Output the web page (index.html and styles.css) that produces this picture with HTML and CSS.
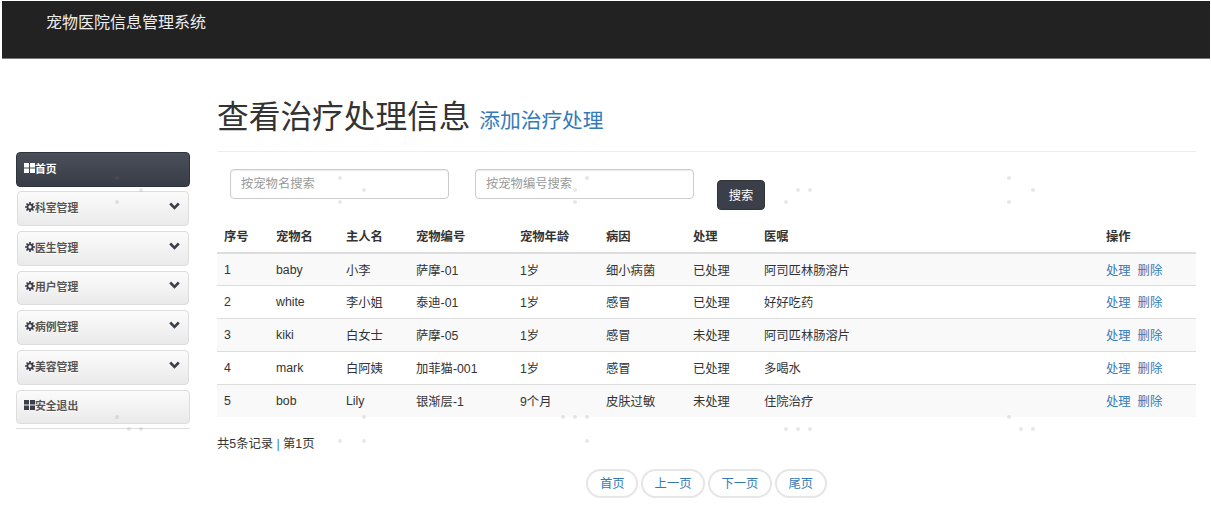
FILE: index.html
```html
<!DOCTYPE html>
<html lang="zh-CN">
<head>
    <meta charset="UTF-8">
    <title>宠物医院信息管理系统</title>
    <link rel="stylesheet" href="styles.css">
</head>
<body>
    <svg width="0" height="0" class="sprites">
        <symbol id="i-grid" viewBox="0 0 11 10">
            <path d="M0 0h5v4.5H0zM6 0h5v4.5H6zM0 5.5h5V10H0zM6 5.5h5V10H6z" fill="currentColor"/>
        </symbol>
        <symbol id="i-cog" viewBox="0 0 12 12">
            <circle cx="6" cy="6" r="3.1" fill="none" stroke="currentColor" stroke-width="2.2"/>
            <path d="M6 0v2.5M6 9.5V12M0 6h2.5M9.5 6H12M1.8 1.8l1.8 1.8M8.4 8.4l1.8 1.8M1.8 10.2l1.8-1.8M8.4 3.6l1.8-1.8" fill="none" stroke="currentColor" stroke-width="2"/>
        </symbol>
        <symbol id="i-down" viewBox="0 0 11 8">
            <path d="M1.2 1.5 5.5 5.8 9.8 1.5" fill="none" stroke="currentColor" stroke-width="2.6"/>
        </symbol>
    </svg>

    <nav class="navbar">
        <a class="brand">宠物医院信息管理系统</a>
    </nav>

    <div class="layout">
        <aside class="sidebar">
            <a class="side-btn home"><svg class="ico-grid"><use href="#i-grid"/></svg>首页</a>
            <a class="side-btn menu"><svg class="ico-cog"><use href="#i-cog"/></svg>科室管理<svg class="ico-down"><use href="#i-down"/></svg></a>
            <a class="side-btn menu"><svg class="ico-cog"><use href="#i-cog"/></svg>医生管理<svg class="ico-down"><use href="#i-down"/></svg></a>
            <a class="side-btn menu"><svg class="ico-cog"><use href="#i-cog"/></svg>用户管理<svg class="ico-down"><use href="#i-down"/></svg></a>
            <a class="side-btn menu"><svg class="ico-cog"><use href="#i-cog"/></svg>病例管理<svg class="ico-down"><use href="#i-down"/></svg></a>
            <a class="side-btn menu"><svg class="ico-cog"><use href="#i-cog"/></svg>美容管理<svg class="ico-down"><use href="#i-down"/></svg></a>
            <a class="side-btn logout"><svg class="ico-grid"><use href="#i-grid"/></svg>安全退出</a>
        </aside>

        <main class="content">
            <div class="page-header">
                <h1>查看治疗处理信息 <small>添加治疗处理</small></h1>
            </div>

            <form class="search">
                <input type="text" placeholder="按宠物名搜索">
                <input type="text" placeholder="按宠物编号搜索">
                <button type="button">搜索</button>
            </form>

            <table class="list">
                <colgroup>
                    <col class="c1"><col class="c2"><col class="c3"><col class="c4"><col class="c5"><col class="c6"><col class="c7"><col class="c8"><col>
                </colgroup>
                <thead>
                    <tr><th>序号</th><th>宠物名</th><th>主人名</th><th>宠物编号</th><th>宠物年龄</th><th>病因</th><th>处理</th><th>医嘱</th><th>操作</th></tr>
                </thead>
                <tbody>
                    <tr><td>1</td><td>baby</td><td>小李</td><td>萨摩-01</td><td>1岁</td><td>细小病菌</td><td>已处理</td><td>阿司匹林肠溶片</td><td><a>处理</a><a>删除</a></td></tr>
                    <tr><td>2</td><td>white</td><td>李小姐</td><td>泰迪-01</td><td>1岁</td><td>感冒</td><td>已处理</td><td>好好吃药</td><td><a>处理</a><a>删除</a></td></tr>
                    <tr><td>3</td><td>kiki</td><td>白女士</td><td>萨摩-05</td><td>1岁</td><td>感冒</td><td>未处理</td><td>阿司匹林肠溶片</td><td><a>处理</a><a>删除</a></td></tr>
                    <tr><td>4</td><td>mark</td><td>白阿姨</td><td>加菲猫-001</td><td>1岁</td><td>感冒</td><td>已处理</td><td>多喝水</td><td><a>处理</a><a>删除</a></td></tr>
                    <tr><td>5</td><td>bob</td><td>Lily</td><td>银渐层-1</td><td>9个月</td><td>皮肤过敏</td><td>未处理</td><td>住院治疗</td><td><a>处理</a><a>删除</a></td></tr>
                </tbody>
            </table>

            <p class="total">共5条记录 <span class="sep">|</span> 第1页</p>

            <ul class="pager">
                <li><a>首页</a></li>
                <li><a>上一页</a></li>
                <li><a>下一页</a></li>
                <li><a>尾页</a></li>
            </ul>
        </main>
    </div>

    <!-- background particle dots, they float over everything -->
    <svg class="dots" width="1211" height="509">
        <circle cx="117" cy="178" r="2"/><circle cx="141" cy="190" r="2"/><circle cx="117" cy="202" r="2"/>
        <circle cx="340" cy="178" r="2"/><circle cx="364" cy="190" r="2"/><circle cx="340" cy="202" r="2"/>
        <circle cx="587" cy="178" r="2"/><circle cx="575" cy="190" r="2"/><circle cx="575" cy="202" r="2"/>
        <circle cx="798" cy="190" r="2"/><circle cx="810" cy="190" r="2"/><circle cx="786" cy="202" r="2"/>
        <circle cx="1009" cy="178" r="2"/><circle cx="1033" cy="190" r="2"/><circle cx="1009" cy="202" r="2"/>
        <circle cx="117" cy="417" r="2"/><circle cx="129" cy="429" r="2"/><circle cx="141" cy="429" r="2"/>
        <circle cx="364" cy="417" r="2"/><circle cx="340" cy="441" r="2"/><circle cx="364" cy="441" r="2"/>
        <circle cx="563" cy="417" r="2"/><circle cx="575" cy="417" r="2"/><circle cx="587" cy="417" r="2"/><circle cx="587" cy="441" r="2"/>
        <circle cx="786" cy="429" r="2"/><circle cx="798" cy="429" r="2"/><circle cx="810" cy="429" r="2"/>
        <circle cx="1009" cy="417" r="2"/><circle cx="1021" cy="429" r="2"/><circle cx="1033" cy="429" r="2"/>
    </svg>
</body>
</html>
```

FILE: styles.css
```css
* {
    box-sizing: border-box;
}
html, body {
    margin: 0;
    height: 509px;
    overflow: hidden;
}
body {
    font-family: "Liberation Sans", "Noto Sans CJK SC", sans-serif;
    font-size: 12.3px;
    color: #333;
    background: #fff;
    padding: 1px 1px 0 2px;
    position: relative;
}
.sprites {
    position: absolute;
}

.navbar {
    height: 58px;
    background: #222;
    border-bottom: 1px solid #777;
    padding: 12px 0 0 44px;
}
.brand {
    font-size: 16px;
    line-height: 20px;
    color: #eee;
}

.layout {
    display: flex;
    padding-left: 14px;
}

/* left menu */
.sidebar {
    width: 174px;
    margin-top: 93px;
    padding-bottom: 4px;
    border-bottom: 1px solid #ddd;
    align-self: flex-start;
}
.side-btn {
    display: flex;
    align-items: center;
    height: 34.8px;
    padding-left: 7px;
    padding-bottom: 3px;
    font-size: 10.8px;
    font-weight: bold;
    border-radius: 4px;
    color: #555;
    text-shadow: 0 1px 0 #fff;
    border: 1px solid #ddd;
    background: linear-gradient(#fbfbfb, #eaeaea);
    margin-bottom: 5px;
}
.side-btn.home {
    height: 35px;
    margin-bottom: 4px;
    color: #fff;
    text-shadow: 0 -1px 0 rgba(0,0,0,.3);
    border-color: #2f333b;
    background: linear-gradient(#4a4f5a, #383c46);
}
.side-btn.menu {
    width: 172px;
    margin-left: 1px;
    padding-left: 7px;
}
.side-btn.logout {
    height: 34.5px;
    margin-bottom: 0;
    padding-bottom: 4px;
}
.ico-grid {
    width: 11px;
    height: 10px;
    flex: none;
}
.logout .ico-grid, .ico-cog, .ico-down {
    color: #3a3f4a;
}
.ico-cog {
    width: 10px;
    height: 10px;
    flex: none;
}
.ico-down {
    width: 11px;
    height: 8px;
    flex: none;
    margin-left: auto;
    margin-right: 8px;
    margin-top: -2px;
}

/* right part */
.content {
    width: 979px;
    margin-left: 27px;
}
.page-header {
    height: 93px;
    padding-top: 38px;
    border-bottom: 1px solid #eee;
}
h1 {
    margin: 0;
    font-size: 31.7px;
    font-weight: normal;
    line-height: 40px;
}
h1 small {
    font-size: 20.7px;
    color: #337ab7;
}

.search {
    display: flex;
    align-items: flex-start;
    padding: 17px 0 0 13px;
    height: 69px;
}
.search input {
    width: 219px;
    height: 30px;
    margin-right: 26px;
    padding: 0 10px;
    font: inherit;
    border: 1px solid #ccc;
    border-radius: 4px;
    box-shadow: inset 0 1px 1px rgba(0,0,0,.075);
}
.search input::placeholder {
    color: #999;
}
.search button {
    width: 48px;
    height: 30px;
    margin: 11px 0 0 -3px;
    padding: 0;
    font: inherit;
    color: #fff;
    background: #3b3f4a;
    border: 1px solid #333;
    border-radius: 4px;
}

.list {
    width: 100%;
    table-layout: fixed;
    border-collapse: collapse;
}
.c1 { width: 52px; }
.c2 { width: 70px; }
.c3 { width: 70px; }
.c4 { width: 104px; }
.c5 { width: 86px; }
.c6 { width: 87px; }
.c7 { width: 71px; }
.c8 { width: 342px; }
.list th, .list td {
    padding: 0 7px;
    text-align: left;
    white-space: nowrap;
}
.list th {
    height: 32px;
    padding-bottom: 2px;
    border-bottom: 2px solid #ddd;
    font-weight: bold;
}
.list td {
    height: 32.8px;
    border-top: 1px solid #ddd;
}
.list thead + tbody tr:first-child td {
    border-top: 0;
}
.list tbody tr:nth-child(odd) {
    background: #f9f9f9;
}
.list a {
    color: #337ab7;
    margin-right: 7px;
}

.total {
    margin: 19px 0 0;
    line-height: 17px;
}
.sep {
    color: #337ab7;
}

.pager {
    display: flex;
    justify-content: center;
    gap: 3px;
    list-style: none;
    margin: 16px 0 0;
    padding: 0;
}
.pager a {
    display: block;
    height: 29px;
    line-height: 27px;
    padding: 0 11.5px;
    color: #337ab7;
    background: #fff;
    border: 2px solid #e6e6e6;
    border-radius: 15px;
}

.dots {
    position: absolute;
    top: 0;
    left: 0;
    pointer-events: none;
}
.dots circle {
    fill: rgba(120,120,120,.18);
}
```
